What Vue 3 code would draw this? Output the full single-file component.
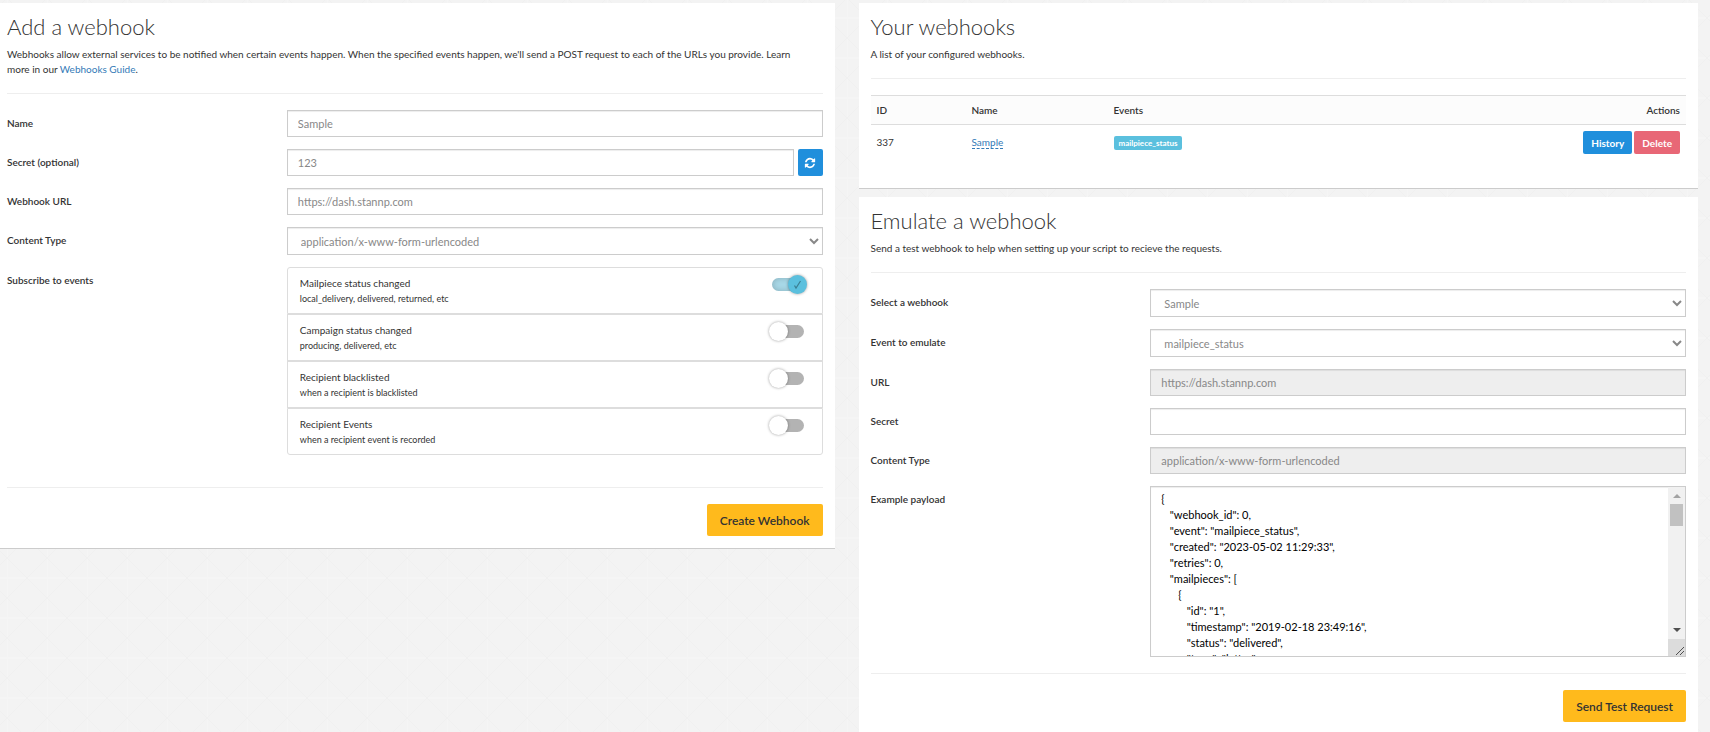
<template>
  <main class="page">
    <div class="column">
      <section class="panel">
        <h2 class="title">Add a webhook</h2>
        <p class="lead">
          Webhooks allow external services to be notified when certain events happen. When the specified
          events happen, we'll send a POST request to each of the URLs you provide. Learn more in our
          <a href="#guide">Webhooks Guide</a>.
        </p>
        <hr>

        <form @submit.prevent>
          <div class="row">
            <label for="name">Name</label>
            <input id="name" v-model="form.name" class="control" type="text">
          </div>
          <div class="row">
            <label for="secret">Secret (optional)</label>
            <div class="with-button">
              <input id="secret" v-model="form.secret" class="control" type="text">
              <button type="button" class="btn-refresh" aria-label="Generate secret">
                <svg viewBox="0 0 1792 1792" width="12" height="12" aria-hidden="true">
                  <path fill="currentColor" d="M1639 1056q0 5-1 7-64 268-268 434.5t-478 166.5q-146 0-282.5-55t-243.5-157l-129 129q-19 19-45 19t-45-19-19-45v-448q0-26 19-45t45-19h448q26 0 45 19t19 45-19 45l-137 137q71 66 161 102t187 36q134 0 250-65t186-179q11-17 53-117 8-23 30-23h192q13 0 22.5 9.5t9.5 22.5zm25-800v448q0 26-19 45t-45 19h-448q-26 0-45-19t-19-45 19-45l138-138q-148-137-349-137-134 0-250 65t-186 179q-11 17-53 117-8 23-30 23h-199q-13 0-22.5-9.5t-9.5-22.5v-7q65-268 270-434.5t480-166.5q146 0 284 55.5t245 156.5l130-129q19-19 45-19t45 19 19 45z" />
                </svg>
              </button>
            </div>
          </div>
          <div class="row">
            <label for="url">Webhook URL</label>
            <input id="url" v-model="form.url" class="control" type="text">
          </div>
          <div class="row">
            <label for="content-type">Content Type</label>
            <select id="content-type" v-model="form.contentType" class="control">
              <option>application/x-www-form-urlencoded</option>
              <option>application/json</option>
            </select>
          </div>
          <div class="row" role="group" aria-labelledby="events-label">
            <span id="events-label" class="row-label">Subscribe to events</span>
            <ul class="events">
              <li v-for="event in events" :key="event.id">
                <label :for="event.id">
                  {{ event.title }}
                  <small>{{ event.hint }}</small>
                </label>
                <input :id="event.id" v-model="event.on" class="switch" type="checkbox">
              </li>
            </ul>
          </div>

          <hr class="after-events">
          <div class="actions">
            <button type="submit" class="btn-primary">Create Webhook</button>
          </div>
        </form>
      </section>
    </div>

    <div class="column">
      <section class="panel hooks">
        <h2 class="title">Your webhooks</h2>
        <p class="lead">A list of your configured webhooks.</p>
        <hr>
        <table>
          <thead>
            <tr>
              <th class="col-id">ID</th>
              <th class="col-name">Name</th>
              <th>Events</th>
              <th class="col-actions">Actions</th>
            </tr>
          </thead>
          <tbody>
            <tr v-for="hook in hooks" :key="hook.id">
              <td>{{ hook.id }}</td>
              <td><a href="#edit" class="editable">{{ hook.name }}</a></td>
              <td><span class="badge">{{ hook.event }}</span></td>
              <td class="col-actions">
                <div class="buttons">
                  <button type="button" class="btn-small history">History</button>
                  <button type="button" class="btn-small delete">Delete</button>
                </div>
              </td>
            </tr>
          </tbody>
        </table>
      </section>

      <section class="panel">
        <h2 class="title">Emulate a webhook</h2>
        <p class="lead">Send a test webhook to help when setting up your script to recieve the requests.</p>
        <hr>

        <form @submit.prevent>
          <div class="row">
            <label for="test-hook">Select a webhook</label>
            <select id="test-hook" class="control">
              <option v-for="hook in hooks" :key="hook.id">{{ hook.name }}</option>
            </select>
          </div>
          <div class="row">
            <label for="test-event">Event to emulate</label>
            <select id="test-event" class="control">
              <option>mailpiece_status</option>
            </select>
          </div>
          <div class="row">
            <label for="test-url">URL</label>
            <input id="test-url" class="control" type="text" value="https://dash.stannp.com" readonly>
          </div>
          <div class="row">
            <label for="test-secret">Secret</label>
            <input id="test-secret" class="control" type="text">
          </div>
          <div class="row">
            <label for="test-type">Content Type</label>
            <input id="test-type" class="control" type="text" value="application/x-www-form-urlencoded" readonly>
          </div>
          <div class="row">
            <label for="payload">Example payload</label>
            <div class="payload-box">
              <textarea id="payload" v-model="payload" class="payload" spellcheck="false"></textarea>
              <div class="scrollbar" aria-hidden="true">
                <svg class="arrow up" viewBox="0 0 17 17"><path d="M5 11L9 7L13 11z" /></svg>
                <span class="thumb"></span>
                <svg class="arrow down" viewBox="0 0 17 17"><path d="M5 6L9 10L13 6z" /></svg>
                <svg class="grip" viewBox="0 0 17 17"><path d="M8 16L16 8M12 16L16 12" /></svg>
              </div>
            </div>
          </div>

          <hr>
          <div class="actions">
            <button type="submit" class="btn-primary">Send Test Request</button>
          </div>
        </form>
      </section>
    </div>
  </main>
</template>

<script setup>
import { reactive, ref } from 'vue'

const form = reactive({
  name: 'Sample',
  secret: '123',
  url: 'https://dash.stannp.com',
  contentType: 'application/x-www-form-urlencoded',
})

const events = reactive([
  { id: 'mailpiece_status', title: 'Mailpiece status changed', hint: 'local_delivery, delivered, returned, etc', on: true },
  { id: 'campaign_status', title: 'Campaign status changed', hint: 'producing, delivered, etc', on: false },
  { id: 'blacklisted', title: 'Recipient blacklisted', hint: 'when a recipient is blacklisted', on: false },
  { id: 'recipient_event', title: 'Recipient Events', hint: 'when a recipient event is recorded', on: false },
])

const hooks = [{ id: 337, name: 'Sample', event: 'mailpiece_status' }]

const mailpiece = (id) => ({
  id,
  timestamp: '2019-02-18 23:49:16',
  status: 'delivered',
  type: 'letter',
  format: 'A4',
  country: 'GB',
  cost: '0.00',
})

const payload = ref(JSON.stringify({
  webhook_id: 0,
  event: 'mailpiece_status',
  created: '2023-05-02 11:29:33',
  retries: 0,
  mailpieces: ['1', '2', '3', '4', '5'].map(mailpiece),
}, null, 3))
</script>

<style>
body {
  background-color: #f3f3f3;
  background-image: url("data:image/svg+xml,%3Csvg xmlns='http://www.w3.org/2000/svg' width='40' height='40'%3E%3Cpath d='M0 0V40M0 20H40' stroke='%23f5f5f5' stroke-width='2' fill='none'/%3E%3Cpath d='M0 0L40 40M40 0L0 40' stroke='%23f0f0f0' fill='none'/%3E%3C/svg%3E");
  background-position: 7px 38px;
}
</style>

<style scoped>
.page {
  display: grid;
  grid-template-columns: 1fr 1fr;
  gap: 24px;
  align-items: start;
  margin-left: -5px;
  padding: 3px 12px 0 0;
  font-family: Lato, "Open Sans", sans-serif;
  font-size: 10px;
  line-height: 15px;
  color: #333;
}

.column {
  display: grid;
  gap: 8px;
  min-width: 0;
}

.panel {
  padding: 12px;
  background: #fff;
  border-bottom: 1px solid #ccc;
}

.panel.hooks {
  padding-bottom: 28px;
}

.title {
  margin: 0 0 8px;
  font-size: 22px;
  line-height: 24px;
  font-weight: 300;
}

.lead {
  margin: 0;
  padding-right: 12px;
}

a {
  color: #337ab7;
  text-decoration: none;
}

hr {
  height: 1px;
  margin: 16px 0;
  border: 0;
  background: #eee;
}

/* Form rows */

.row {
  display: grid;
  grid-template-columns: calc(100% / 3 + 8px) 1fr;
  align-items: start;
  margin-bottom: 12px;
}

.row > label,
.row-label {
  padding-top: 6px;
  font-weight: 600;
}

.control,
.payload {
  box-sizing: border-box;
  width: 100%;
  min-width: 0;
  margin: 0;
  border: 1px solid #ccc;
  border-radius: 0;
  background-color: #fff;
  box-shadow: inset 0 1px 1px rgba(0, 0, 0, 0.075);
  font-family: inherit;
  font-size: 11px;
}

.control {
  height: 27px;
  padding: 4px 10px;
  color: #888;
}

.control[readonly] {
  background-color: #eee;
}

select.control {
  height: 28px;
  padding: 4px 0 4px 9px;
}

.with-button {
  display: flex;
  gap: 4px;
}

.btn-refresh {
  display: flex;
  flex: none;
  align-items: center;
  justify-content: center;
  width: 25px;
  padding: 0;
  border: 0;
  border-radius: 2px;
  background: #208fdc;
  color: #fff;
}

.events {
  margin: 0;
  padding: 0;
  list-style: none;
}

.events li {
  display: flex;
  justify-content: space-between;
  align-items: flex-start;
  padding: 7px 15px 7px 12px;
  border: 1px solid #ddd;
}

.events li:first-child {
  border-radius: 3px 3px 0 0;
}

.events li:last-child {
  border-radius: 0 0 3px 3px;
}

.events label {
  padding-top: 1px;
}

.events small {
  display: block;
  font-size: 9px;
}

/* Toggle: ::before is the track, ::after the knob */
.switch {
  position: relative;
  flex: none;
  width: 38px;
  height: 19px;
  margin: 0;
  appearance: none;
}

.switch::before {
  content: '';
  position: absolute;
  inset: 3px;
  border-radius: 7px;
  background: #b3b3b3;
}

.switch::after {
  content: '';
  position: absolute;
  left: 0;
  width: 19px;
  height: 19px;
  border-radius: 50%;
  background: #fff;
  box-shadow: 0 0 3px rgba(0, 0, 0, 0.4);
}

.switch:checked::before {
  background: #a9d9e8;
  box-shadow: inset 0 0 6px rgba(0, 0, 0, 0.2);
}

.switch:checked::after {
  left: auto;
  right: 0;
  background: #5bc0de url("data:image/svg+xml,%3Csvg xmlns='http://www.w3.org/2000/svg' viewBox='0 0 19 19'%3E%3Cpath d='M6.5 10.5L8 13L12.5 6' fill='none' stroke='%233b7f93' stroke-width='1.2'/%3E%3C/svg%3E");
}

.after-events {
  margin-top: 32px;
}

.actions {
  display: flex;
  justify-content: flex-end;
}

.btn-primary {
  height: 32px;
  padding: 0 13px;
  border: 0;
  border-radius: 2px;
  background: #ffba1c;
  color: #333;
  font-family: inherit;
  font-size: 12px;
  font-weight: 600;
}

/* Webhook list */

table {
  width: 100%;
  border-collapse: collapse;
}

th {
  height: 28px;
  padding: 0 6px;
  border-top: 1px solid #ddd;
  border-bottom: 1px solid #ddd;
  background: #fcfcfc;
  font-weight: 600;
  text-align: left;
}

td {
  padding: 6px;
}

.col-id {
  width: 83px;
}

.col-name {
  width: 130px;
}

.col-actions {
  text-align: right;
}

.editable {
  border-bottom: 1px dashed #337ab7;
}

.badge {
  display: inline-block;
  padding: 0 5px;
  border-radius: 2px;
  background: #5bc0de;
  color: #fff;
  font-size: 8px;
  line-height: 14px;
  font-weight: 700;
}

.buttons {
  display: flex;
  justify-content: flex-end;
  gap: 2px;
}

.btn-small {
  height: 23px;
  padding: 0 8px;
  border: 0;
  border-radius: 2px;
  color: #fff;
  font-family: inherit;
  font-size: 10px;
  font-weight: 700;
}

.history {
  background: #208fdc;
}

.delete {
  background: #e86776;
}

/* Payload box */

.payload-box {
  position: relative;
}

.payload {
  display: block;
  height: 171px;
  padding: 4px 27px 4px 10px;
  overflow-y: scroll;
  resize: none;
  scrollbar-width: none;
  color: #000;
  line-height: 16px;
}

.scrollbar {
  position: absolute;
  top: 1px;
  right: 1px;
  bottom: 1px;
  display: flex;
  flex-direction: column;
  width: 17px;
  background: #f1f1f1;
  pointer-events: none;
}

.scrollbar svg {
  flex: none;
  width: 17px;
  height: 17px;
}

.up {
  fill: #a3a3a3;
}

.thumb {
  height: 22px;
  margin: 0 2px;
  background: #c1c1c1;
}

.down {
  margin-top: auto;
  fill: #505050;
}

.grip {
  background: #dcdcdc;
  stroke: #505050;
}
</style>
